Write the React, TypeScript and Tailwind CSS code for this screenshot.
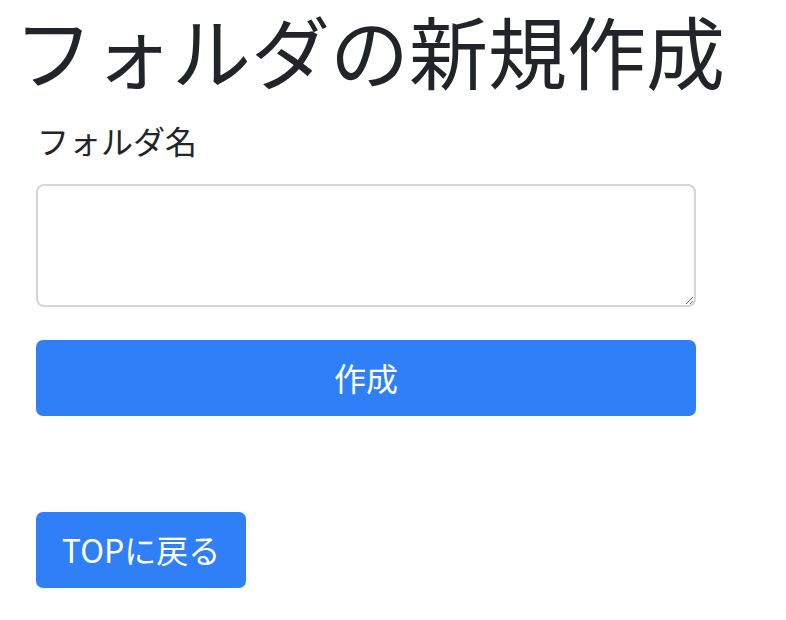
import React from "react";

export default function App() {
  const font = { fontFamily: '"Noto Sans CJK JP", "Noto Sans", sans-serif' };
  return (
    <div className="bg-white w-[786px] h-[620px] text-[#212529] overflow-hidden" style={font}>
      <h1 className="pl-[14px] mt-[-8px] mb-[-10px] text-[79px] leading-[116px] font-normal whitespace-nowrap">フォルダの新規作成</h1>
      <div className="px-[36px] w-[732px]">
        <label className="block pt-[20px] text-[32px] leading-[44px] pl-[1px]">フォルダ名</label>
        <textarea className="block mt-[22px] w-full h-[123px] border-2 border-[#d3d6d9] rounded-[8px] bg-white resize-y"></textarea>
        <button className="block mt-[33px] w-full h-[76px] rounded-[7px] bg-[#2f80f7] text-white text-[32px] leading-[40px] pb-[2px]">作成</button>
        <button className="block mt-[96px] w-[210px] h-[76px] rounded-[7px] bg-[#2f80f7] text-white text-[32px] leading-[40px] pb-[2px]">TOPに戻る</button>
      </div>
    </div>
  );
}
